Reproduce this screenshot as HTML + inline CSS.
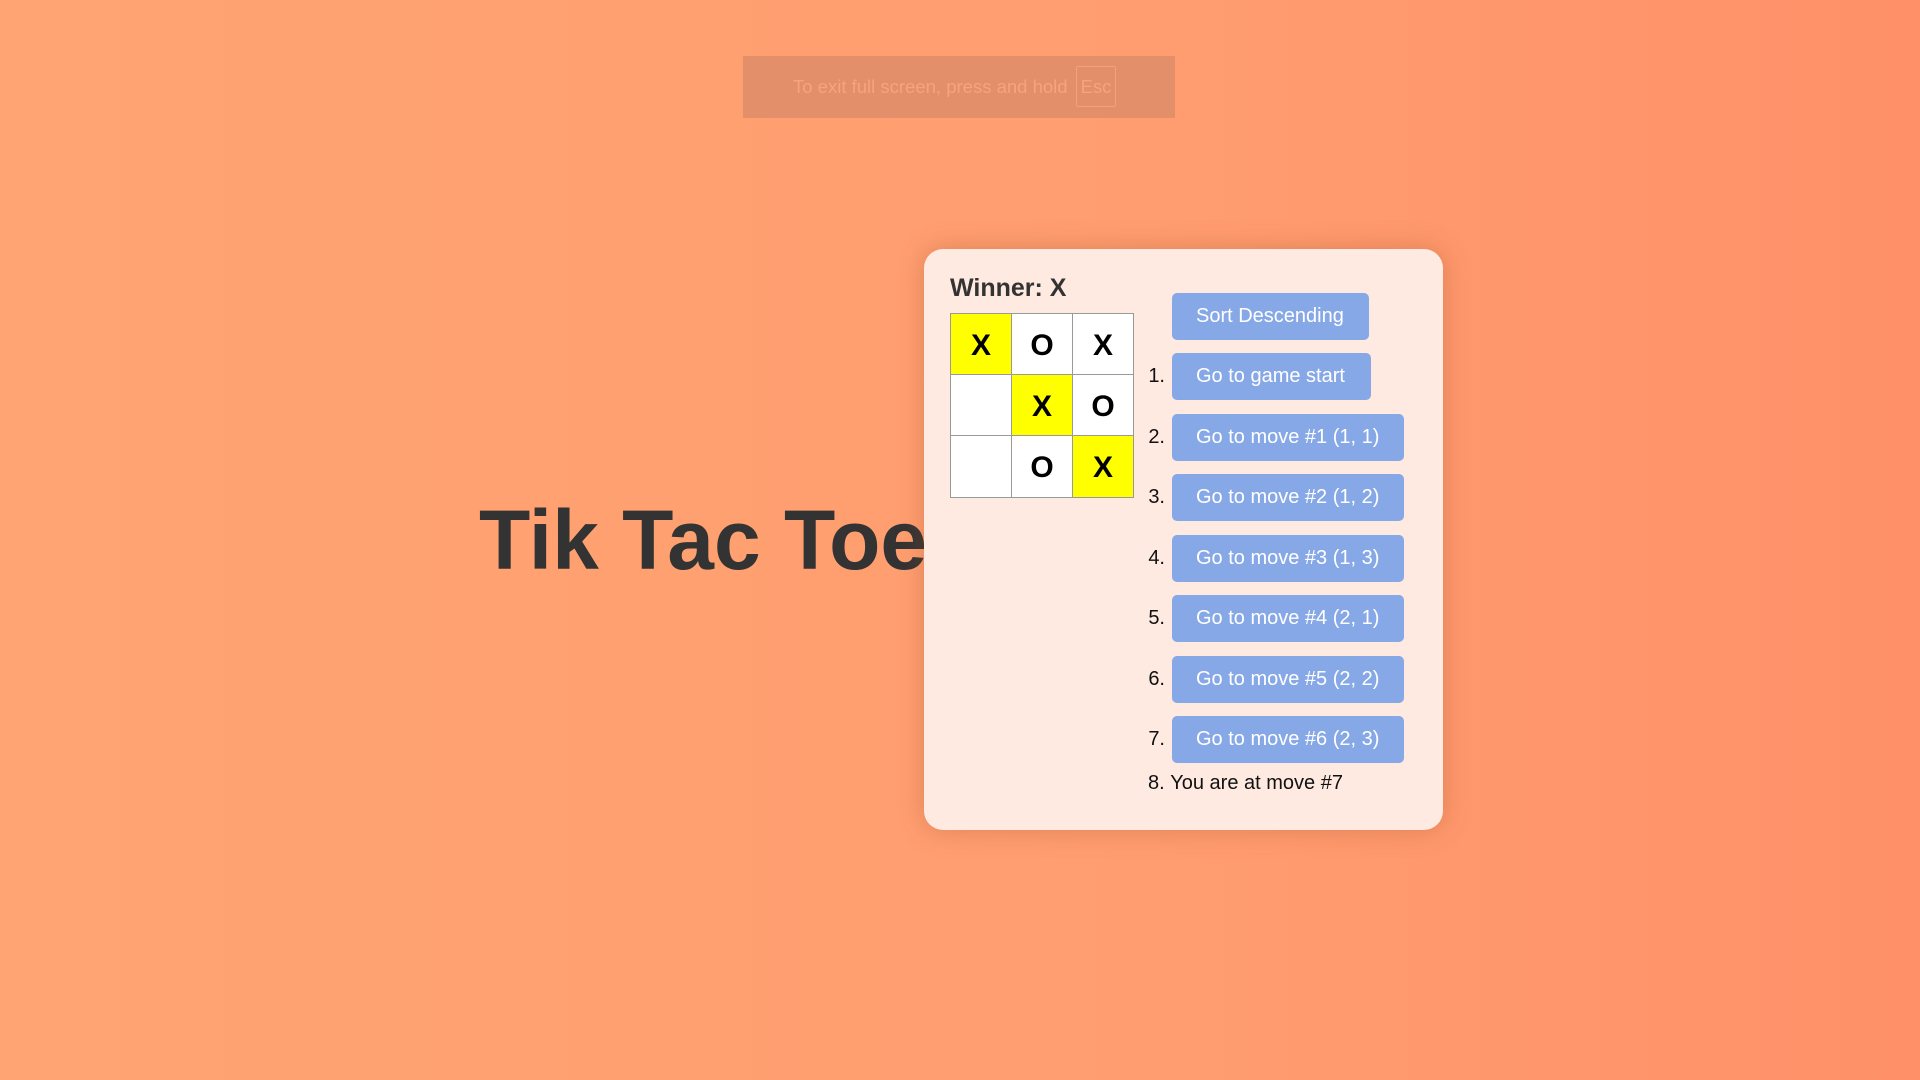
<!DOCTYPE html>
<html><head><meta charset="utf-8"><style>
html,body{margin:0;padding:0;width:1920px;height:1080px;overflow:hidden}
body{background:linear-gradient(90deg,#ffa472 0%,#ff9d70 60%,#ff9068 100%);font-family:"Liberation Sans",Arial,sans-serif;position:relative}
.toast{position:absolute;left:743px;top:56px;width:432px;height:62px;background:#e38f6a;color:#f6a47c;font-size:18.5px}
.toast span{position:absolute;left:50px;top:20px}
.toast .esc{position:absolute;left:333px;top:10px;width:40px;height:41px;border:1px solid #f3a27c;border-radius:2px;box-sizing:border-box;line-height:39px;text-align:center}
h1{position:absolute;left:479px;top:490px;margin:0;font-size:84px;font-weight:bold;color:#333;line-height:100px;white-space:nowrap}
.panel{position:absolute;left:924px;top:249px;width:519px;height:581px;background:#ffeae1;border-radius:19px;box-shadow:0 0 26px rgba(160,80,40,.35)}
.win{position:absolute;left:26px;top:24px;font-size:25px;line-height:30px;font-weight:bold;color:#333}
.board{position:absolute;left:26px;top:64px;width:184px;height:185px;border:1px solid #999;box-sizing:border-box;display:grid;grid-template-columns:61px 61px 60px;grid-template-rows:61px 61px 61px;background:#fff}
.c{border-right:1px solid #999;border-bottom:1px solid #999;display:flex;align-items:center;justify-content:center;font-size:30px;font-weight:bold;color:#000;padding-top:3px;box-sizing:border-box}
.c:nth-child(3n){border-right:none}.c:nth-child(n+7){border-bottom:none}
.y{background:#ff0}
.btn{position:absolute;left:248px;height:47px;background:#87a8e6;color:#fff;border-radius:5px;font-size:20px;line-height:47px;padding-left:24px;box-sizing:border-box;white-space:nowrap}
.n{position:absolute;left:241px;font-size:20px;color:#111;transform:translateX(-100%);line-height:47px}
</style></head><body>
<div class="toast"><span>To exit full screen, press and hold</span><div class="esc">Esc</div></div>
<h1>Tik Tac Toe</h1>
<div class="panel">
<div class="win">Winner: X</div>
<div class="board">
<div class="c y">X</div><div class="c">O</div><div class="c">X</div>
<div class="c"></div><div class="c y">X</div><div class="c">O</div>
<div class="c"></div><div class="c">O</div><div class="c y">X</div>
</div>
<div class="btn" style="top:44px;width:197px">Sort Descending</div>
<div class="n" style="top:104px">1.</div><div class="btn" style="top:104px;width:199px">Go to game start</div>
<div class="n" style="top:165px">2.</div><div class="btn" style="top:165px;width:232px">Go to move #1 (1, 1)</div>
<div class="n" style="top:225px">3.</div><div class="btn" style="top:225px;width:232px">Go to move #2 (1, 2)</div>
<div class="n" style="top:286px">4.</div><div class="btn" style="top:286px;width:232px">Go to move #3 (1, 3)</div>
<div class="n" style="top:346px">5.</div><div class="btn" style="top:346px;width:232px">Go to move #4 (2, 1)</div>
<div class="n" style="top:407px">6.</div><div class="btn" style="top:407px;width:232px">Go to move #5 (2, 2)</div>
<div class="n" style="top:467px">7.</div><div class="btn" style="top:467px;width:232px">Go to move #6 (2, 3)</div>
<div style="position:absolute;left:224px;top:523px;font-size:20px;color:#111;white-space:nowrap">8.&nbsp;You are at move #7</div>
</div>
</body></html>
